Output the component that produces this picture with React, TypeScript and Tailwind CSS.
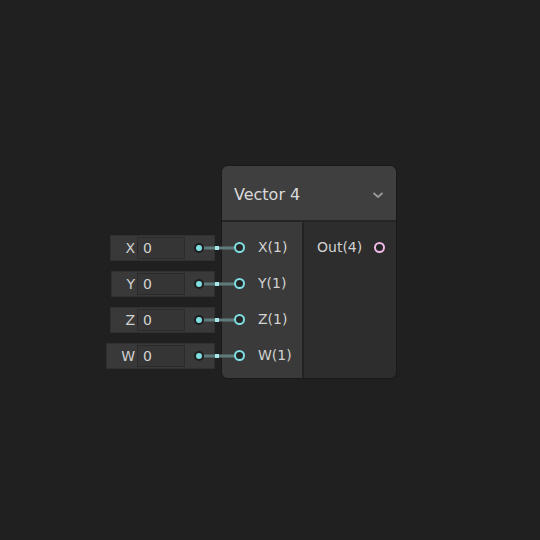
const inputs = [
  { axis: "X", value: "0" },
  { axis: "Y", value: "0" },
  { axis: "Z", value: "0" },
  { axis: "W", value: "0" },
];

function Ring({ color }: { color: string }) {
  return (
    <span
      className={`relative block w-[11px] h-[11px] rounded-full border-2 bg-[#262626] shrink-0 ${color}`}
    />
  );
}

function InputField({ axis, value }: { axis: string; value: string }) {
  return (
    <div className="relative flex items-center h-[26px] bg-[#393939] border border-[#303030] pl-[14px] pr-[10px]">
      <span className="text-[14px] text-[#d2d2d2] mr-[2px]">{axis}</span>
      <div className="w-[48px] h-[22px] bg-[#353535] border border-[#2a2a2a] flex items-center pl-[5px] text-[14px] text-[#d2d2d2]">
        {value}
      </div>
      {/* wire to the port */}
      <span className="absolute right-[-20px] top-1/2 -translate-y-1/2 w-[36px] h-[3px] bg-[#5f7c7c]" />
      <span className="absolute right-[-5px] top-1/2 -translate-y-1/2 w-[4px] h-[4px] bg-[#a9e6ea]" />
      <span className="relative ml-[9px] w-[10px] h-[10px] rounded-full bg-[#1e1e1e] flex items-center justify-center">
        <span className="w-[6px] h-[6px] rounded-full bg-[#7fdfe2]" />
      </span>
    </div>
  );
}

export default function App() {
  return (
    <div
      className="relative w-[540px] h-[540px] bg-[#202020] overflow-hidden"
      style={{ fontFamily: '"DejaVu Sans", "Liberation Sans", sans-serif' }}
    >
      <div className="absolute left-[100px] top-[165px] flex items-start">
        <div className="relative z-10 flex flex-col items-end gap-[10px] mt-[70px] w-[115px]">
          {inputs.map((i) => (
            <InputField key={i.axis} axis={i.axis} value={i.value} />
          ))}
        </div>

        <div className="ml-[6px] w-[176px] h-[214px] rounded-[7px] border border-[#1a1a1a] bg-[#2d2d2d] overflow-hidden flex flex-col">
          <div className="h-[56px] bg-[#3f3f3f] border-b-2 border-[#242424] flex items-center justify-between pl-[12px] pr-[12px]">
            <span className="mt-[3px] text-[16px] text-[#dadada]">Vector 4</span>
            <svg width="12" height="8" viewBox="0 0 12 8" className="mt-[3px]">
              <path d="M1.5 2 L6 6 L10.5 2" fill="none" stroke="#9a9a9a" strokeWidth="1.8" />
            </svg>
          </div>
          <div className="flex flex-1">
            <div className="w-[82px] bg-[#3a3a3a] border-r-2 border-[#232323] pt-[7px]">
              {inputs.map((i) => (
                <div key={i.axis} className="h-[36px] flex items-center pl-[12px]">
                  <Ring color="border-[#7fdfe2]" />
                  <span className="ml-[13px] text-[14px] text-[#d2d2d2]">{i.axis}(1)</span>
                </div>
              ))}
            </div>
            <div className="flex-1 pt-[7px]">
              <div className="h-[36px] flex items-center justify-between pl-[13px] pr-[11px]">
                <span className="text-[14px] text-[#d2d2d2]">Out(4)</span>
                <Ring color="border-[#f0b9e8]" />
              </div>
            </div>
          </div>
        </div>
      </div>
    </div>
  );
}
